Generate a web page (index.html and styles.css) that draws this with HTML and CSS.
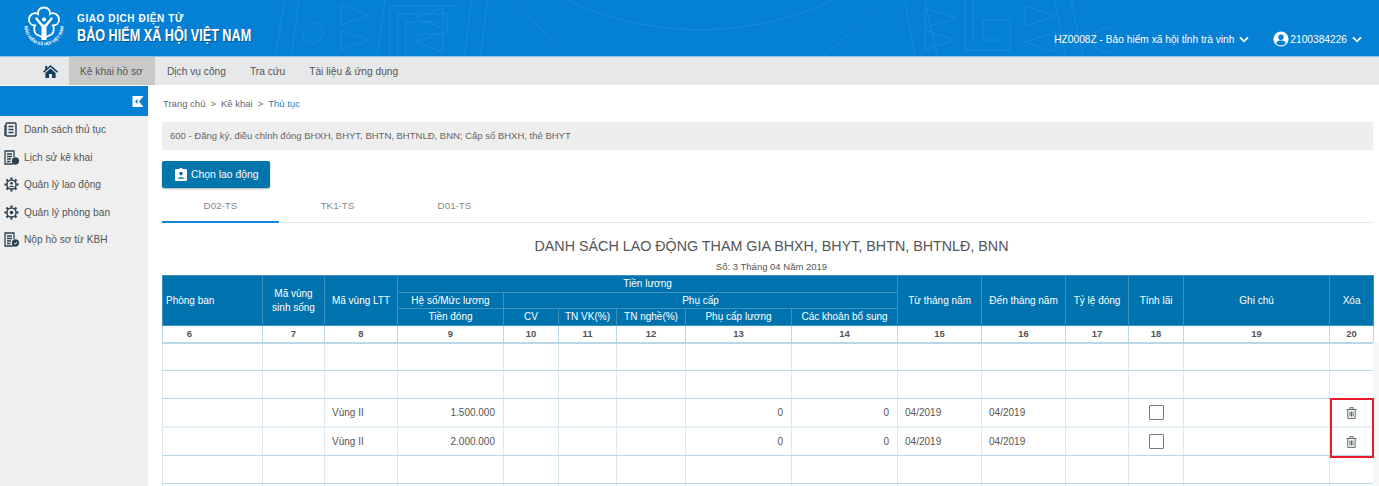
FILE: index.html
```html
<!DOCTYPE html>
<html lang="vi">
<head>
    <meta charset="UTF-8">
    <meta name="viewport" content="width=device-width, initial-scale=1.0">
    <title>Giao dịch điện tử - Bảo hiểm xã hội Việt Nam</title>
    <link rel="stylesheet" href="styles.css">
</head>
<body>
    <header class="top-bar">
        <svg class="top-pattern" width="900" height="56" viewBox="0 0 900 56" fill="none" stroke="#1b8bd8" stroke-width="1">
            <path d="M20 0 L10 56 M34 0 L26 56 M120 0 L112 56 M206 0 L200 56 M222 0 L216 56 M640 0 L650 56 M660 0 L672 56 M790 0 L800 56 M806 0 L818 56"/>
            <circle cx="48" cy="33" r="10"/>
            <path d="M76 5 L104 15 L76 25 Z M76 30 L104 40 L76 50 Z M178 8 L150 18 L178 28 Z M178 32 L150 42 L178 52 Z"/>
            <path d="M125 56 V6 H190 M133 56 V14 H182 V34 H150 M141 56 V22 H172 M700 0 V50 H745 V20 H718 V40 H735 M708 0 V42 M760 6 L790 16 L760 26 Z M790 32 L760 42 L790 52 Z M660 8 L690 18 L660 28 Z M660 30 L690 40 L660 50 Z"/>
            <circle cx="840" cy="40" r="12"/>
            <path d="M250 0 L300 56 M620 0 L560 56 M300 0 Q435 60 570 0"/>
        </svg>
        <div class="brand">
            <svg class="brand-logo" width="44" height="44" viewBox="0 0 44 44">
                <defs><path id="logoArc" d="M2.5 20 A19.5 19.5 0 0 0 41.5 20"/></defs>
                <path d="M22 1.5 C26 1.5 28.5 4.5 28 8 C31.5 6 37 8 37 13.5 C37 17.5 34 19.5 31 19.5 C33 23 31.5 28.5 27 29.5 L22 32 L17 29.5 C12.5 28.5 11 23 13 19.5 C10 19.5 7 17.5 7 13.5 C7 8 12.5 6 16 8 C15.5 4.5 18 1.5 22 1.5 Z" fill="none" stroke="#fff" stroke-width="1.8"/>
                <circle cx="22" cy="13.5" r="2.1" fill="#fff"/>
                <path d="M14.5 11 L21 18.5 H23 L29.5 11 L31 12.5 L24.5 21 V34 H19.5 V21 L13 12.5 Z" fill="#fff"/>
                <text class="logo-ring" fill="#fff"><textPath href="#logoArc" startOffset="50%" text-anchor="middle">BẢO HIỂM XÃ HỘI VIỆT NAM</textPath></text>
            </svg>
            <div class="brand-text">
                <div class="brand-small">GIAO DỊCH ĐIỆN TỬ</div>
                <div class="brand-big">BẢO HIỂM XÃ HỘI VIỆT NAM</div>
            </div>
        </div>
        <div class="account">
            <span class="org">HZ0008Z - Bảo hiểm xã hội tỉnh trà vinh</span>
            <svg class="chevron" width="10" height="7" viewBox="0 0 10 7"><path d="M1 1.3 L5 5.3 L9 1.3" fill="none" stroke="#fff" stroke-width="1.8"/></svg>
            <svg class="user-icon" width="16" height="16" viewBox="0 0 16 16">
                <circle cx="8" cy="8" r="7.6" fill="#fff"/>
                <circle cx="8" cy="6.2" r="2.7" fill="#0480d4"/>
                <path d="M3.2 12.4 C4 10 6 9.6 8 9.6 C10 9.6 12 10 12.8 12.4 C11.6 13.7 10 14.3 8 14.3 C6 14.3 4.4 13.7 3.2 12.4 Z" fill="#0480d4"/>
            </svg>
            <span class="user-id">2100384226</span>
            <svg class="chevron" width="10" height="7" viewBox="0 0 10 7"><path d="M1 1.3 L5 5.3 L9 1.3" fill="none" stroke="#fff" stroke-width="1.8"/></svg>
        </div>
    </header>

    <nav class="main-nav">
        <a class="nav-home">
            <svg width="15" height="13" viewBox="0 0 15 13"><path d="M7.5 0 L15 6.6 L14 7.7 L7.5 2 L1 7.7 L0 6.6 L2.2 4.7 V1 H4.2 V2.9 Z M2.4 8 L7.5 3.5 L12.6 8 V13 H9 V9 H6 V13 H2.4 Z" fill="#123f5c"/></svg>
        </a>
        <a class="nav-item active">Kê khai hồ sơ</a>
        <a class="nav-item">Dịch vụ công</a>
        <a class="nav-item">Tra cứu</a>
        <a class="nav-item">Tài liệu &amp; ứng dụng</a>
    </nav>

    <div class="layout">
        <aside class="sidebar">
            <div class="side-toggle">
                <svg width="12" height="11" viewBox="0 0 12 11"><path d="M0.5 0 H11.5 L7 5.5 L11.5 11 H0.5 Z M5.5 3 L3 5.5 L5.5 8 Z" fill="#fff" fill-rule="evenodd"/></svg>
            </div>
            <ul class="side-menu">
                <li>
                    <svg width="13" height="15" viewBox="0 0 13 15" fill="none" stroke="#2b4150" stroke-width="1.4"><rect x="2" y="1" width="10" height="13" rx="1"/><path d="M1 3 V14 M4.5 4.5 H9.5 M4.5 7.5 H9.5 M4.5 10.5 H9.5"/></svg>
                    Danh sách thủ tục
                </li>
                <li>
                    <svg width="15" height="15" viewBox="0 0 15 15" fill="none" stroke="#2b4150" stroke-width="1.3"><path d="M9 14 H1 V1 H10 V7 M3 4 H8 M3 6.5 H8 M3 9 H7 M3 11.5 H6.5"/><circle cx="11.5" cy="11" r="3" fill="#2b4150"/></svg>
                    Lịch sử kê khai
                </li>
                <li>
                    <svg width="15" height="15" viewBox="0 0 15 15" fill="none" stroke="#2b4150"><circle cx="7.5" cy="7.5" r="4.6" stroke-width="1.5"/><path stroke-width="2.2" d="M7.5 0.4 V2.6 M7.5 12.4 V14.6 M0.4 7.5 H2.6 M12.4 7.5 H14.6 M2.5 2.5 L4 4 M11 11 L12.5 12.5 M12.5 2.5 L11 4 M4 11 L2.5 12.5"/><circle cx="7.5" cy="6.3" r="1.4" fill="#2b4150" stroke="none"/><path d="M5 10 C5.5 8.4 9.5 8.4 10 10 Z" fill="#2b4150" stroke="none"/></svg>
                    Quản lý lao động
                </li>
                <li>
                    <svg width="15" height="15" viewBox="0 0 15 15" fill="none" stroke="#2b4150"><circle cx="7.5" cy="7.5" r="4.6" stroke-width="1.5"/><path stroke-width="2.2" d="M7.5 0.4 V2.6 M7.5 12.4 V14.6 M0.4 7.5 H2.6 M12.4 7.5 H14.6 M2.5 2.5 L4 4 M11 11 L12.5 12.5 M12.5 2.5 L11 4 M4 11 L2.5 12.5"/><circle cx="7.5" cy="7.5" r="1.8" fill="#2b4150" stroke="none"/></svg>
                    Quản lý phòng ban
                </li>
                <li>
                    <svg width="15" height="15" viewBox="0 0 15 15" fill="none" stroke="#2b4150" stroke-width="1.3"><path d="M9 14 H1 V1 H10 V7 M3 4 H8 M3 6.5 H8 M3 9 H7 M3 11.5 H6.5"/><circle cx="11.5" cy="11" r="3" fill="#2b4150"/><path d="M10 11 L11.2 12.2 L13 10" stroke="#fff" stroke-width="0.9"/></svg>
                    Nộp hồ sơ từ KBH
                </li>
            </ul>
        </aside>

        <main class="content">
            <div class="breadcrumb">
                <span>Trang chủ</span><span class="sep">&gt;</span><span>Kê khai</span><span class="sep">&gt;</span><span class="current">Thủ tục</span>
            </div>
            <div class="proc-bar">600 - Đăng ký, điều chỉnh đóng BHXH, BHYT, BHTN, BHTNLĐ, BNN; Cấp sổ BHXH, thẻ BHYT</div>
            <button class="pick-btn" type="button">
                <svg width="12" height="13" viewBox="0 0 12 13"><path d="M1 1 H4.4 A1.7 1.7 0 0 1 7.6 1 H11 A1 1 0 0 1 12 2 V12 A1 1 0 0 1 11 13 H1 A1 1 0 0 1 0 12 V2 A1 1 0 0 1 1 1 Z" fill="#fff"/><circle cx="6" cy="5.6" r="1.8" fill="#0275ad"/><path d="M2.6 10.8 C3 8.6 9 8.6 9.4 10.8 Z" fill="#0275ad"/></svg>
                Chọn lao động
            </button>
            <div class="tabs">
                <a class="tab active">D02-TS</a>
                <a class="tab">TK1-TS</a>
                <a class="tab">D01-TS</a>
            </div>
            <h2 class="list-title">DANH SÁCH LAO ĐỘNG THAM GIA BHXH, BHYT, BHTN, BHTNLĐ, BNN</h2>
            <p class="list-sub">Số: 3 Tháng 04 Năm 2019</p>

            <table class="grid">
                <colgroup>
                    <col class="c100"><col class="c62"><col class="c73"><col class="c106">
                    <col class="c55"><col class="c58"><col class="c69"><col class="c106"><col class="c106">
                    <col class="c84"><col class="c84"><col class="c63"><col class="c55"><col class="c146"><col class="c44">
                </colgroup>
                <thead>
                    <tr>
                        <th rowspan="3" class="left">Phòng ban</th>
                        <th rowspan="3">Mã vùng<br>sinh sống</th>
                        <th rowspan="3">Mã vùng LTT</th>
                        <th colspan="6">Tiền lương</th>
                        <th rowspan="3">Từ tháng năm</th>
                        <th rowspan="3">Đến tháng năm</th>
                        <th rowspan="3">Tỷ lệ đóng</th>
                        <th rowspan="3">Tính lãi</th>
                        <th rowspan="3">Ghi chú</th>
                        <th rowspan="3">Xóa</th>
                    </tr>
                    <tr>
                        <th>Hệ số/Mức lương</th>
                        <th colspan="5">Phụ cấp</th>
                    </tr>
                    <tr>
                        <th>Tiền đóng</th>
                        <th>CV</th>
                        <th>TN VK(%)</th>
                        <th>TN nghề(%)</th>
                        <th>Phụ cấp lương</th>
                        <th>Các khoản bổ sung</th>
                    </tr>
                </thead>
                <tbody>
                    <tr class="index-row">
                        <td class="first">6</td><td>7</td><td>8</td><td>9</td><td>10</td><td>11</td><td>12</td><td>13</td><td>14</td><td>15</td><td>16</td><td>17</td><td>18</td><td>19</td><td>20</td>
                    </tr>
                    <tr class="data-row"><td></td><td></td><td></td><td></td><td></td><td></td><td></td><td></td><td></td><td></td><td></td><td></td><td></td><td></td><td></td></tr>
                    <tr class="data-row"><td></td><td></td><td></td><td></td><td></td><td></td><td></td><td></td><td></td><td></td><td></td><td></td><td></td><td></td><td></td></tr>
                    <tr class="data-row thick">
                        <td></td><td></td><td class="pad">Vùng II</td><td class="num">1.500.000</td><td></td><td></td><td></td><td class="num">0</td><td class="num">0</td>
                        <td class="pad">04/2019</td><td class="pad">04/2019</td><td></td>
                        <td class="mid"><span class="check"></span></td><td></td>
                        <td class="mid">
                            <svg class="trash" width="11" height="12" viewBox="0 0 11 12" fill="none" stroke="#5f6b70"><path d="M0.5 2.5 H10.5 M3.8 2.3 V0.7 H7.2 V2.3 M1.8 2.5 V11.4 H9.2 V2.5 M4 4.5 V9.5 M5.5 4.5 V9.5 M7 4.5 V9.5"/></svg>
                        </td>
                    </tr>
                    <tr class="data-row">
                        <td></td><td></td><td class="pad">Vùng II</td><td class="num">2.000.000</td><td></td><td></td><td></td><td class="num">0</td><td class="num">0</td>
                        <td class="pad">04/2019</td><td class="pad">04/2019</td><td></td>
                        <td class="mid"><span class="check"></span></td><td></td>
                        <td class="mid">
                            <svg class="trash" width="11" height="12" viewBox="0 0 11 12" fill="none" stroke="#5f6b70"><path d="M0.5 2.5 H10.5 M3.8 2.3 V0.7 H7.2 V2.3 M1.8 2.5 V11.4 H9.2 V2.5 M4 4.5 V9.5 M5.5 4.5 V9.5 M7 4.5 V9.5"/></svg>
                        </td>
                    </tr>
                    <tr class="data-row"><td></td><td></td><td></td><td></td><td></td><td></td><td></td><td></td><td></td><td></td><td></td><td></td><td></td><td></td><td></td></tr>
                    <tr class="data-row"><td></td><td></td><td></td><td></td><td></td><td></td><td></td><td></td><td></td><td></td><td></td><td></td><td></td><td></td><td></td></tr>
                </tbody>
            </table>
            <div class="scroll-track"></div>
            <div class="red-mark"></div>
        </main>
    </div>
</body>
</html>
```

FILE: styles.css
```css
* {
    box-sizing: border-box;
}
html, body {
    height: 486px;
    overflow: hidden;
}
body {
    margin: 0;
    font-family: "Liberation Sans", Arial, sans-serif;
    font-size: 10px;
    color: #555;
    background: #fff;
}

/* top bar */
.top-bar {
    position: relative;
    height: 57px;
    background: #0480d4;
    border-bottom: 1px solid #8fc3e8;
    display: flex;
    justify-content: space-between;
    overflow: hidden;
}
.top-pattern {
    position: absolute;
    left: 265px;
    top: 0;
}
.brand {
    position: relative;
    display: flex;
    padding: 6px 0 0 22px;
}
.brand-logo {
    margin-right: 11px;
}
.logo-ring {
    font-size: 4.4px;
    font-weight: bold;
}
.brand-text {
    padding-top: 7px;
    color: #fff;
}
.brand-small {
    font-size: 10px;
    font-weight: bold;
    letter-spacing: 0.6px;
    line-height: 12px;
}
.brand-big {
    width: 240px;
    margin-top: 1px;
    font-size: 16px;
    font-weight: bold;
    line-height: 19px;
    white-space: nowrap;
    transform: scaleX(0.79);
    transform-origin: left center;
    text-shadow: 1px 1px 1px #0a4f86;
}
.account {
    position: relative;
    display: flex;
    align-items: center;
    height: 22px;
    margin-top: 28px;
    padding-right: 17px;
    color: #fff;
    font-size: 10.2px;
}
.chevron {
    margin-left: 5px;
}
.user-icon {
    margin: 0 1px 0 24px;
}

/* nav */
.main-nav {
    height: 28px;
    background: #e7e8ea;
    display: flex;
    padding-left: 30px;
    margin-bottom: 1px;
}
.main-nav a {
    display: flex;
    align-items: center;
    color: #555;
    font-size: 10.2px;
}
.nav-home {
    width: 39px;
    padding-left: 13px;
}
.nav-item {
    padding: 0 12px;
}
.nav-item.active {
    width: 86px;
    padding: 0 0 0 11px;
    background: #c9c9c9;
}

/* sidebar */
.layout {
    display: flex;
    height: 400px;
    overflow: hidden;
}
.sidebar {
    width: 148px;
    background: #efefef;
    flex-shrink: 0;
}
.side-toggle {
    height: 30px;
    background: #0480d4;
    display: flex;
    justify-content: flex-end;
    align-items: center;
    padding-right: 4px;
}
.side-menu {
    list-style: none;
    margin: 0;
    padding: 0;
}
.side-menu li {
    position: relative;
    height: 27.5px;
    line-height: 27.5px;
    padding-left: 24px;
    font-size: 10.2px;
}
.side-menu svg {
    position: absolute;
    left: 4px;
    top: 6px;
}

/* content */
.content {
    position: relative;
    flex: 1;
    min-width: 0;
    overflow: hidden;
    padding: 0 6px 0 14px;
}
.breadcrumb {
    height: 36px;
    padding-left: 1px;
    line-height: 35px;
    color: #666;
    font-size: 9.5px;
}
.breadcrumb .sep {
    margin: 0 5px;
}
.breadcrumb .current {
    color: #2a7fc0;
}
.proc-bar {
    height: 28px;
    line-height: 28px;
    background: #eeeeee;
    padding-left: 8px;
    font-size: 9.5px;
    color: #666;
}
.pick-btn {
    display: flex;
    align-items: center;
    height: 27px;
    width: 108px;
    margin-top: 11px;
    padding: 0 0 0 13px;
    border: none;
    border-radius: 2px;
    background: #0275ad;
    color: #fff;
    font-family: inherit;
    font-size: 10.4px;
    box-shadow: 0 1px 2px rgba(0, 0, 0, 0.3);
}
.pick-btn svg {
    margin-right: 4px;
}
.tabs {
    display: flex;
    height: 35px;
    border-bottom: 1px solid #e6e6e6;
}
.tab {
    width: 117px;
    text-align: center;
    line-height: 36px;
    color: #888;
    font-size: 9.8px;
    height: 35px;
}
.tab.active {
    border-bottom: 2px solid #1a86d8;
}
.list-title {
    margin: 14px 0 0;
    height: 18px;
    padding-left: 8px;
    line-height: 18px;
    text-align: center;
    font-size: 14.3px;
    font-weight: normal;
    color: #555;
}
.list-sub {
    margin: 5px 0 0;
    height: 14px;
    padding-left: 8px;
    line-height: 14px;
    text-align: center;
    font-size: 9.5px;
}

/* table */
.grid {
    width: 1211px;
    margin-top: 1px;
    table-layout: fixed;
    border-collapse: collapse;
    font-size: 10px;
}
.c44 { width: 44px; }
.c55 { width: 55px; }
.c58 { width: 58px; }
.c62 { width: 62px; }
.c63 { width: 63px; }
.c69 { width: 69px; }
.c73 { width: 73px; }
.c84 { width: 84px; }
.c100 { width: 100px; }
.c106 { width: 106px; }
.c146 { width: 146px; }
.grid th {
    height: 16.7px;
    padding: 0;
    background: #0073ae;
    border: 1px solid #3a92bf;
    color: #fff;
    font-weight: normal;
    text-align: center;
    line-height: 14px;
}
.grid th.left {
    text-align: left;
    padding-left: 3px;
}
.grid td {
    border: 1px solid #b9d8e6;
    padding: 0;
}
.index-row td {
    height: 17px;
    text-align: center;
    color: #555;
    font-weight: bold;
    font-size: 9.5px;
    border-bottom-width: 2px;
}
.index-row td.first {
    padding-right: 46px;
}
.data-row td {
    height: 28.2px;
    border-left-color: #dbe9f0;
    border-right-color: #dbe9f0;
}
.data-row.thick td {
    border-bottom: 2px solid #e4eff4;
}
.grid td.pad {
    padding-left: 7px;
}
.grid td.num {
    text-align: right;
    padding-right: 8px;
}
.grid td.mid {
    text-align: center;
}
.check {
    display: inline-block;
    width: 15px;
    height: 15px;
    border: 1px solid #777;
    border-radius: 1px;
    vertical-align: middle;
}
.trash {
    vertical-align: middle;
}
.scroll-track {
    position: absolute;
    right: 0;
    top: 256px;
    bottom: 0;
    width: 6px;
    background: #f7f7f7;
}
.red-mark {
    position: absolute;
    left: 1182px;
    top: 312px;
    width: 44px;
    height: 60px;
    border: 2px solid #e81c2a;
}
```
